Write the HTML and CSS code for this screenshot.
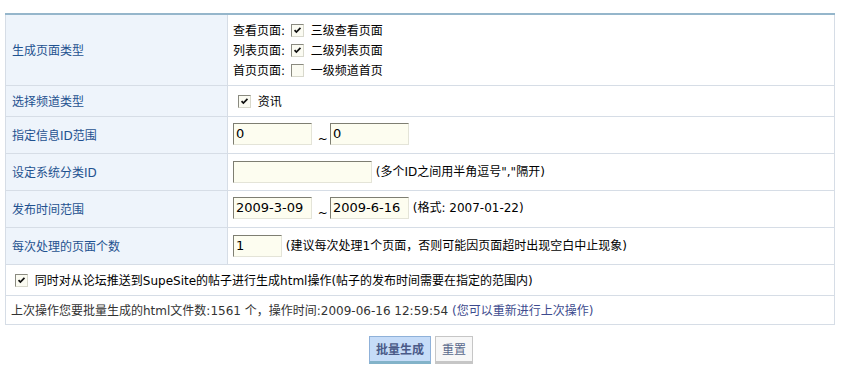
FILE: index.html
```html
<!DOCTYPE html>
<html lang="zh-CN">
<head>
    <meta charset="UTF-8">
    <title>批量生成html</title>
    <link rel="stylesheet" href="styles.css">
</head>
<body>
<div class="page">
    <table class="formtable">
        <tr class="row-type">
            <th>生成页面类型</th>
            <td>
                <div class="line">查看页面: <span class="cb on"><svg viewBox="0 0 13 13"><path d="M3 6l2.2 2.4L10 3.4" /></svg></span> 三级查看页面</div>
                <div class="line">列表页面: <span class="cb on"><svg viewBox="0 0 13 13"><path d="M3 6l2.2 2.4L10 3.4" /></svg></span> 二级列表页面</div>
                <div class="line">首页页面: <span class="cb"></span> 一级频道首页</div>
            </td>
        </tr>
        <tr class="row-small">
            <th>选择频道类型</th>
            <td><span class="cb on first"><svg viewBox="0 0 13 13"><path d="M3 6l2.2 2.4L10 3.4" /></svg></span> 资讯</td>
        </tr>
        <tr class="row-input">
            <th>指定信息ID范围</th>
            <td><input class="txt short" value="0"> <span class="tilde">~</span><input class="txt short" value="0"></td>
        </tr>
        <tr class="row-input">
            <th>设定系统分类ID</th>
            <td><input class="txt wide" value=""> <span class="note">(多个ID之间用半角逗号","隔开)</span></td>
        </tr>
        <tr class="row-input">
            <th>发布时间范围</th>
            <td><input class="txt short" value="2009-3-09"> <span class="tilde">~</span><input class="txt short" value="2009-6-16"> <span class="note">(格式: 2007-01-22)</span></td>
        </tr>
        <tr class="row-input">
            <th>每次处理的页面个数</th>
            <td><input class="txt tiny" value="1"> <span class="note">(建议每次处理1个页面，否则可能因页面超时出现空白中止现象)</span></td>
        </tr>
        <tr class="row-small">
            <td colspan="2" class="full"><span class="cb on"><svg viewBox="0 0 13 13"><path d="M3 6l2.2 2.4L10 3.4" /></svg></span> 同时对从论坛推送到SupeSite的帖子进行生成html操作(帖子的发布时间需要在指定的范围内)</td>
        </tr>
        <tr class="row-last">
            <td colspan="2" class="full last">上次操作您要批量生成的html文件数:1561 个，操作时间:2009-06-16 12:59:54 <a href="#">(您可以重新进行上次操作)</a></td>
        </tr>
    </table>
    <div class="buttons">
        <button class="btn submit">批量生成</button>
        <button class="btn reset">重置</button>
    </div>
</div>
</body>
</html>
```

FILE: styles.css
```css
body {
    margin: 0;
    background: #ffffff;
    font-family: "DejaVu Sans", "Noto Sans CJK SC", sans-serif;
    font-size: 12px;
    color: #000000;
}
.page {
    padding: 13px 5px 0 5px;
}
.formtable {
    width: 830px;
    border-collapse: collapse;
    border-top: 2px solid #95b6cb;
}
.formtable th,
.formtable td {
    border: 1px solid #d6dde6;
    border-top: 0;
    padding: 0 0 0 5px;
    text-align: left;
    vertical-align: middle;
}
.formtable th {
    width: 215px;
    background: #eef4fb;
    color: #1f5290;
    font-weight: normal;
    padding-left: 6px;
}
.row-type {
    height: 71px;
}
.row-type td {
    padding-top: 2px;
}
.row-small {
    height: 31px;
}
.row-input {
    height: 37px;
}
.row-last {
    height: 29px;
}
.line {
    line-height: 20px;
}
.cb {
    display: inline-block;
    width: 11px;
    height: 11px;
    border: 1px solid;
    border-color: #8a8a80 #d8d8cc #d8d8cc #8a8a80;
    background: #fbfbf2;
    vertical-align: -2px;
    margin: 0 3px 0 2px;
}
.cb svg {
    display: block;
    width: 11px;
    height: 11px;
}
.cb path {
    fill: none;
    stroke: #111111;
    stroke-width: 2;
}
.cb.first {
    margin-left: 5px;
}
.full {
    padding-left: 6px;
}
.full .cb {
    margin-left: 4px;
}
.last {
    color: #333333;
}
.last a {
    color: #3d4b8e;
    text-decoration: none;
}
.txt {
    height: 20px;
    padding: 0 2px;
    margin: 0;
    border: 1px solid;
    border-color: #7e7e72 #e4e4d8 #e4e4d8 #7e7e72;
    background: #fdfdf0;
    font-family: "DejaVu Sans", "Noto Sans CJK SC", sans-serif;
    font-size: 13px;
    color: #000000;
    vertical-align: middle;
    box-sizing: content-box;
}
.short {
    width: 73px;
}
.wide {
    width: 133px;
}
.tiny {
    width: 43px;
}
.tilde {
    display: inline-block;
    margin: 0 2px 0 2px;
    vertical-align: -6px;
}
.note {
    color: #000000;
}
.buttons {
    display: flex;
    justify-content: center;
    gap: 4px;
    margin-top: 11px;
}
.btn {
    height: 28px;
    padding: 0 6px;
    font-family: "Noto Sans CJK SC", sans-serif;
    font-size: 12px;
    cursor: pointer;
}
.submit {
    background: #c6dcf8;
    border: 1px solid #8fb1d9;
    border-bottom: 3px solid #83b3c9;
    color: #4a5a88;
    font-weight: bold;
}
.reset {
    background: #f7f7f7;
    border: 1px solid #c6c6c6;
    border-bottom: 3px solid #c6c6c6;
    color: #5a6a8c;
}
```
